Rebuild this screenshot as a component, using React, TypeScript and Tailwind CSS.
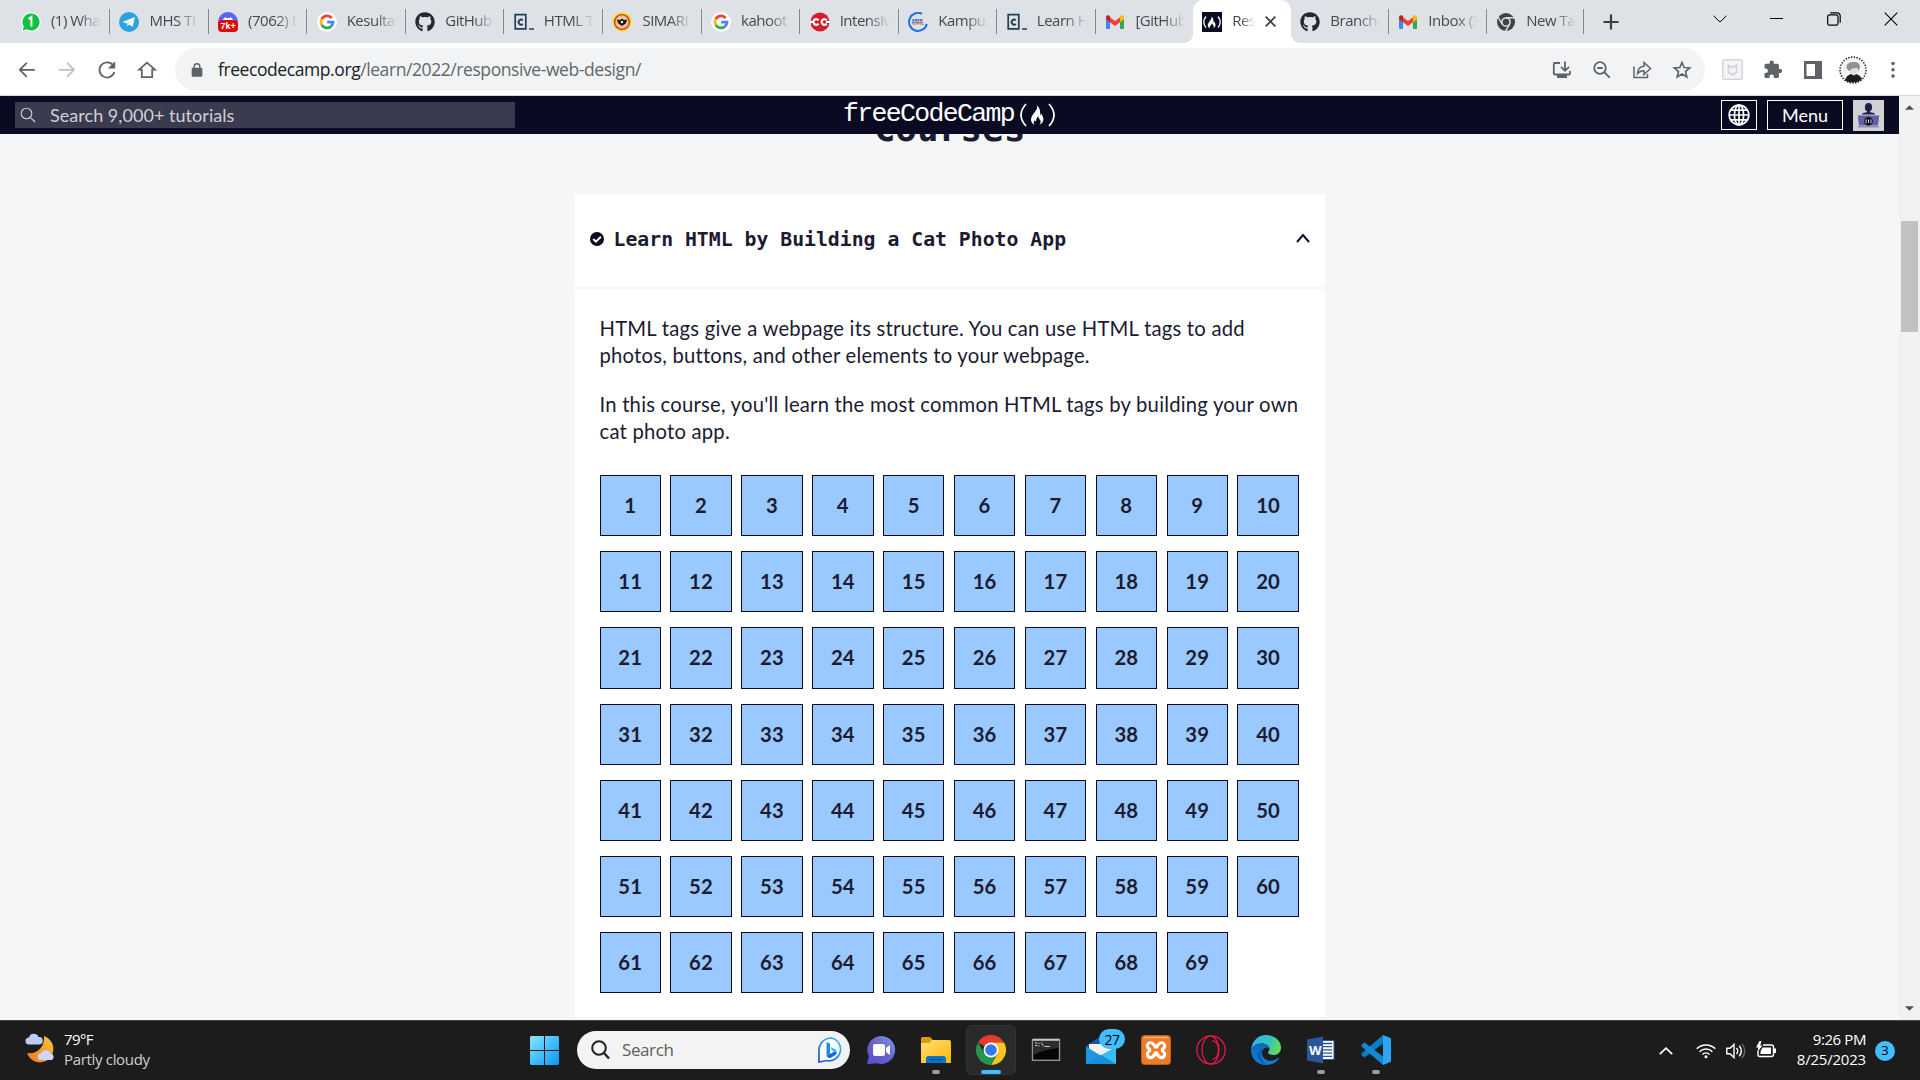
import React from "react";
import { FaGithub } from "react-icons/fa";

const ui = "font-['Open_Sans','Noto_Sans',sans-serif]";
const lato = "font-['Lato',sans-serif]";
const mono = "font-['DejaVu_Sans_Mono',monospace]";

function WhatsApp() {
  return (
    <svg viewBox="0 0 20 20" className="size-5">
      <path d="M10 .3a9.7 9.7 0 1 1-4.6 18.2L.3 19.8l1.3-5A9.7 9.7 0 0 1 10 .3Z" fill="#fff" />
      <path d="M10 1.5a8.5 8.5 0 1 1-4.3 15.8L1.7 18.5l1.1-4A8.5 8.5 0 0 1 10 1.5Z" fill="#10c143" />
      <path d="M7.6 7.1 10.4 5v9.6" fill="none" stroke="#fff" strokeWidth="2" />
    </svg>
  );
}
function Telegram() {
  return (
    <svg viewBox="0 0 20 20" className="size-5">
      <circle cx="10" cy="10" r="10" fill="#2ba3df" />
      <path d="M3.5 9.9 15.8 5.1 13.7 15 10.3 12.5 8.4 14.3 8 11.4 3.5 9.9Z" fill="#fff" />
      <path d="m8 11.4 5.2-4-3.9 4.5-.9 2.4Z" fill="#b9dcf0" />
    </svg>
  );
}
function Discord() {
  return (
    <span className="relative block size-5">
      <svg viewBox="0 0 20 20" className="size-5">
        <circle cx="10" cy="10" r="10" fill="#5865f2" />
        <path d="M4.5 10c.3-3 1.5-4.3 3.3-4.8l.7.9h3l.7-.9c1.8.5 3 1.800 3.3 4.800Z" fill="#fff" />
        <rect y="8" width="20" height="12" rx="4" fill="#dd0a0a" />
      </svg>
      <span className="absolute inset-x-0 top-2 text-center font-['Liberation_Sans',sans-serif] text-[9px] leading-3 font-bold text-white">7k+</span>
    </span>
  );
}
function Google() {
  return (
    <svg viewBox="0 0 20 20" className="size-5">
      <circle cx="10" cy="10" r="10" fill="#fff" />
      <g fill="none" strokeWidth="2.800">
        <path d="M14.7 6A6 6 0 0 0 4.8 7.100" stroke="#ea4335" />
        <path d="M4.8 7.100a6 6 0 0 0 0 5.800" stroke="#fbbc05" />
        <path d="M4.8 12.9a6 6 0 0 0 9 1.700" stroke="#34a853" />
        <path d="M13.800 14.6A6 6 0 0 0 16 10.100H10.200" stroke="#4285f4" />
      </g>
    </svg>
  );
}
function Github() {
  return <FaGithub className="size-5 text-[#24292f]" />;
}
function Codecademy() {
  return (
    <svg viewBox="0 0 20 20" className="size-5">
      <path d="M1.200 2.700h10.600v14.200H1.200ZM15 17h5" fill="none" stroke="#204056" strokeWidth="1.700" />
      <path d="M8.800 8.200a2.500 2.500 0 1 0 0 3.800" fill="none" stroke="#204056" strokeWidth="2" />
    </svg>
  );
}
function Simari() {
  return (
    <svg viewBox="0 0 20 20" className="size-5">
      <path d="m10 0 7 2.500 3 7-3 7.500-7 3-7-3L0 9.500l3-7Z" fill="#f3df1c" />
      <circle cx="10" cy="10" r="7.400" fill="#f7b7a0" stroke="#d8362a" strokeWidth="1.400" />
      <circle cx="10" cy="9.500" r="5.200" fill="#f0c9a0" />
      <path d="M4.800 7.500 8 8l2-1.600L12 8l3.200-.5-1.500 4L10 14l-3.700-2.500Z" fill="#1d1a14" />
      <circle cx="10" cy="10" r="1.200" fill="#eee" />
    </svg>
  );
}
function Intensive() {
  return (
    <svg viewBox="0 0 20 20" className="size-5">
      <circle cx="10" cy="10" r="9.500" fill="#d11f2b" />
      <path d="M8.500 8.400a2.800 2.800 0 1 0 0 3.200M16.800 8.400a2.800 2.800 0 1 0 0 3.200M0 10h2.500M16 10h4" fill="none" stroke="#fff" strokeWidth="2.200" />
    </svg>
  );
}
function Kampus() {
  return (
    <svg viewBox="0 0 20 20" className="size-5">
      <path d="M14 1.800A9 9 0 1 0 18.800 12" fill="none" stroke="#1a73e8" strokeWidth="2" />
      <path d="M4.500 8h10.500M4 10.500h11" stroke="#5c79a8" strokeWidth="2" strokeDasharray="2 .5" />
      <path d="M5 12.400q6-1.600 11 .3" fill="none" stroke="#f08433" strokeWidth="1" />
    </svg>
  );
}
function Gmail() {
  return (
    <svg viewBox="0 0 20 20" className="size-5">
      <path d="M1 5v10.800c0 .8.500 1.200 1.200 1.200H5V8Z" fill="#4285f4" />
      <path d="M19 5v10.800c0 .8-.5 1.200-1.200 1.200H15V8Z" fill="#34a853" />
      <path d="M5 5.200 10 9l5-3.800v5L10 14l-5-3.800Z" fill="#ea4335" />
      <path d="M1 7.200V5.500c0-2 2-2.900 3.500-1.800L5 4.100v6.100Z" fill="#c5221f" />
      <path d="M19 7.200V5.500c0-2-2-2.900-3.500-1.800L15 4.100v6.100Z" fill="#fbbc04" />
    </svg>
  );
}
const FLAME =
  "M6.300 0c1 3-.3 4.500-2.300 7.300C2 10 0 12 0 15.200c0 2.600 1.600 4.700 4 5.800-1.400-1.700-1.300-3.600.2-5 .3.900.8 1.300 1.500 1.200-.4-2.600.6-4 2.300-5.500-.2 2.900 2.700 3.600 2.500 6.300 0 1.200-.6 2.200-1.700 3 2.700-1 4.700-3.200 4.700-6 0-3-1.700-4.300-2.400-6.500-.3 1.300-.6 1.900-1.300 2.200C10.600 6.700 9.500 2 6.300 0Z";
function Fcc() {
  return (
    <svg viewBox="0 0 20 20" className="size-5">
      <path d="M0 0h20v20H0z" fill="#0a0a23" />
      <path d="M4 4.500Q-.5 10 4 15.500M16 4.500q4.500 5.500 0 11" fill="none" stroke="#fff" strokeWidth="1.300" />
      <path d={FLAME} fill="#fff" transform="translate(5.800 4.500) scale(.57)" />
    </svg>
  );
}
function ChromeGray() {
  return (
    <svg viewBox="0 0 20 20" className="size-5">
      <circle cx="10" cy="10" r="9" fill="#3f4346" />
      <circle cx="10" cy="10" r="4.100" fill="#3f4346" stroke="#dee1e6" strokeWidth="1.500" />
      <path d="M10 5.700h8.300M6.200 12.100 2 5M13.700 12.100 9.400 19.300" stroke="#dee1e6" strokeWidth="1.400" />
    </svg>
  );
}

type Tab = { icon: () => React.ReactElement; text: string; active?: boolean; noSep?: boolean; narrow?: boolean };
const tabs: Tab[] = [
  { icon: WhatsApp, text: "(1) Whats" },
  { icon: Telegram, text: "MHS TI 2" },
  { icon: Discord, text: "(7062) Di" },
  { icon: Google, text: "Kesultana" },
  { icon: Github, text: "GitHub -" },
  { icon: Codecademy, text: "HTML Tab" },
  { icon: Simari, text: "SIMARI" },
  { icon: Google, text: "kahoot -" },
  { icon: Intensive, text: "Intensive" },
  { icon: Kampus, text: "Kampus M" },
  { icon: Codecademy, text: "Learn HT" },
  { icon: Gmail, text: "[GitHub]", noSep: true, narrow: true },
  { icon: Fcc, text: "Resp", active: true },
  { icon: Github, text: "Branches" },
  { icon: Gmail, text: "Inbox (3)" },
  { icon: ChromeGray, text: "New Tab", narrow: true },
];

function TabStrip() {
  return (
    <div className={`flex h-[43px] bg-[#dee1e6] pl-[11.400px] text-[#45494d] ${ui}`}>
      {tabs.map((t, i) => (
        <div
          key={i}
          className={`relative flex shrink-0 items-center pl-[9.500px] ${t.narrow ? "w-[96.900px]" : i > 11 ? "w-[98px]" : "w-[98.600px]"} ${
            t.active ? "rounded-t-[10px] bg-white" : ""
          }`}
        >
          <t.icon />
          <span
            className={`-mt-[2.500px] ml-[10px] overflow-hidden text-[15px] leading-6 tracking-[-0.5px] whitespace-nowrap ${
              t.active ? "w-[23px] [mask-image:linear-gradient(to_right,black_40%,transparent)]" : "w-[50px] [mask-image:linear-gradient(to_right,black_56%,transparent)]"
            }`}
          >
            {t.text}
          </span>
          {t.active && (
            <>
              <svg viewBox="0 0 10 10" className="ml-[10px] size-[11px]">
                <path d="m.6.6 8.800 8.800M9.400.6.6 9.400" stroke="#3c4043" strokeWidth="1.600" />
              </svg>
              <i className="absolute bottom-0 -left-[10px] size-[10px] bg-[radial-gradient(circle_at_0_0,transparent_10px,white_10.500px)]" />
              <i className="absolute -right-[10px] bottom-0 size-[10px] bg-[radial-gradient(circle_at_100%_0,transparent_10px,white_10.500px)]" />
            </>
          )}
          {!t.active && !t.noSep && <i className="absolute top-[9px] right-0 h-[25px] w-px bg-[#85898d]" />}
        </div>
      ))}
      <div className="ml-[19px] flex w-4 items-center">
        <svg viewBox="0 0 16 16" className="size-4">
          <path d="M8 .5v15M.5 8h15" stroke="#3c4043" strokeWidth="2.200" />
        </svg>
      </div>
      <div className="mr-[1px] ml-auto flex h-[37px] items-center text-black">
        <span className="flex w-[57px] justify-center">
          <svg viewBox="0 0 14 8" className="h-2 w-3.5" fill="none" stroke="currentColor"><path d="m.5.800 6.500 6.200L13.500.800" /></svg>
        </span>
        <span className="flex w-[57px] justify-center"><i className="block h-px w-[13px] bg-black" /></span>
        <span className="flex w-[57px] justify-center">
          <svg viewBox="0 0 14 14" className="size-3.5" fill="none" stroke="currentColor" strokeWidth="1.200">
            <rect x=".7" y="2.900" width="10.300" height="10.300" rx="1.800" />
            <path d="M3.200.8H10a3.100 3.100 0 0 1 3.200 3.200v6.800" />
          </svg>
        </span>
        <span className="flex w-[57px] justify-center">
          <svg viewBox="0 0 14 14" className="size-3.5" fill="none" stroke="currentColor" strokeWidth="1.100"><path d="m.7.700 12.600 12.600M13.300.700.7 13.300" /></svg>
        </span>
      </div>
    </div>
  );
}

function Slot({ children }: { children: React.ReactNode }) {
  return <span className="flex w-10 shrink-0 items-center justify-center">{children}</span>;
}
function Glyph({ children, dim, s = "size-5" }: { children: React.ReactNode; dim?: boolean; s?: string }) {
  return (
    <svg viewBox="0 0 20 20" className={s} fill="none" stroke={dim ? "#bdc1c6" : "#5f6368"} strokeWidth="1.800">
      {children}
    </svg>
  );
}

function Toolbar() {
  return (
    <div className="flex h-[53px] border-b border-[#d5d7da] bg-white px-[7px] pt-[5px]">
      <div className="flex h-[43px]">
        <Slot><Glyph><path d="M17.800 8.800H3M9.800 1.800l-7 7 7 7" transform="translate(0 1)" /></Glyph></Slot>
        <Slot><Glyph dim><path d="M2 9.800h14.800M10 2.800l7 7-7 7" /></Glyph></Slot>
        <Slot>
          <Glyph>
            <path d="M16.300 5.500A7.600 7.600 0 1 0 17.400 12" />
            <path d="M18.200 1.200v7.300h-7.300Z" fill="#5f6368" stroke="none" />
          </Glyph>
        </Slot>
        <Slot><Glyph><path d="M2 9.700h2.800v7.400h10.400V9.700H18L10 2.600Z" /></Glyph></Slot>
      </div>
      <div className="ml-2 flex h-[43px] w-[1530px] items-center rounded-full bg-[#f1f3f4] pr-[3px] pl-[16px]">
        <svg viewBox="0 0 12 15" className="h-[14px] w-[12px]">
          <rect x=".3" y="5" width="11.400" height="9.700" rx="1.300" fill="#5f6368" />
          <path d="M3 5.500V3.800a3 3 0 0 1 6 0v1.700" fill="none" stroke="#5f6368" strokeWidth="1.500" />
        </svg>
        <span className={`ml-[15px] text-[17.500px] tracking-[-0.420px] whitespace-nowrap text-[#63676c] ${ui}`}>
          <span className="text-[#202124]">freecodecamp.org</span>/learn/2022/responsive-web-design/
        </span>
        <div className="ml-auto flex">
          <Slot>
            <Glyph><path d="M8 3H2.800q-1 0-1 1v9.500q0 1 1 1H17q1 0 1-1V11M13 1.500v8.500M9 6.800l4 4 4-4" /><path d="M5 14.500h10V18H5z" fill="#5f6368" stroke="none" /></Glyph>
          </Slot>
          <Slot><Glyph><circle cx="8" cy="8" r="5.800" /><path d="M5.300 8h5.400M12.200 12.200l5.500 5.500" /></Glyph></Slot>
          <Slot><Glyph><path d="M2 6.500v11h13.500V14" strokeWidth="1.500" /><path d="M5.500 13.500c.3-4.500 2.300-7 6.500-7.300V2.500l6.500 6-6.500 6v-3.800c-3 0-5 .8-6.500 2.800Z" strokeWidth="1.500" /></Glyph></Slot>
          <Slot><Glyph><path d="m10 2.500 2.200 5 5.500.5-4.200 3.600 1.300 5.400-4.800-2.900L5.200 17l1.300-5.400L2.300 8l5.500-.5Z" strokeWidth="1.700" /></Glyph></Slot>
        </div>
      </div>
      <div className="ml-[7.500px] flex h-[43px]">
        <Slot>
          <svg viewBox="0 0 21 21" className="size-[21px]" fill="none"><rect x=".7" y=".7" width="19.600" height="19.600" rx="2" fill="#f3f4f5" stroke="#d3d5d9" strokeWidth="1.400" /><path d="m6.500 6.500 4 2 4-2v7l-4 2.200-4-2.200Z" stroke="#d0d3d6" strokeWidth="1.700" /></svg>
        </Slot>
        <Slot>
          <Glyph><path d="M17.200 9h-1.300V5.300q0-1.500-1.500-1.500h-3.600V2.600a2.100 2.100 0 0 0-4.200 0v1.200H3q-1.500 0-1.500 1.500v3.300h1.200a2.200 2.200 0 0 1 0 4.400H1.500v3.500q0 1.500 1.500 1.500h3.500v-1.200a2.200 2.200 0 0 1 4.400 0V18h3.500q1.500 0 1.500-1.500V13h1.300a2 2 0 0 0 0-4Z" fill="#5f6368" stroke="none" /></Glyph>
        </Slot>
        <Slot><Glyph><path d="M1 1h18v18H1zm2.500 3v12H12V4Z" fill="#5f6368" fillRule="evenodd" stroke="none" /></Glyph></Slot>
        <Slot>
          <svg viewBox="0 0 28 28" className="size-7">
            <circle cx="14" cy="14" r="13" fill="#f4f4f4" stroke="#222" strokeWidth="1.500" strokeDasharray="1.400 1.400" />
            <path d="M6 24q1.500-4.500 6-6h5q4 1 6 5-3.500 3.500-9 3.500T6 24Z" fill="#1d1d1f" />
            <path d="M10.500 11h8v4q-1.500 4-3.500 4.500-3-.5-4.500-4Z" fill="#e8dfdb" />
            <path d="M7.500 12q-.5-5.500 6.500-6 7-.5 7 5l-1.500 4.500-1-3.500-5.500.5-2 2-1 .5Z" fill="#8e9295" />
          </svg>
        </Slot>
        <Slot><Glyph><g fill="#5f6368" stroke="none"><circle cx="10" cy="3.500" r="1.800" /><circle cx="10" cy="9.800" r="1.800" /><circle cx="10" cy="16.100" r="1.800" /></g></Glyph></Slot>
      </div>
    </div>
  );
}

function SiteHeader() {
  return (
    <header className={`relative z-10 flex h-[38px] shrink-0 bg-[#0a0a23] pr-[15px] pl-[15px] ${lato}`}>
      <div className="mt-1.5 flex h-[26px] w-[500px] items-center bg-[#3b3b4f] pl-[5px] text-[#d0d0d5]">
        <svg viewBox="0 0 16 16" className="size-4" fill="none" stroke="#d0d0d5" strokeWidth="1.100"><circle cx="6.500" cy="6.500" r="5.300" /><path d="m10.300 10.300 4.700 4.700" /></svg>
        <span className="ml-[14px] text-[18px] leading-[26px] tracking-[0.04px]">Search 9,000+ tutorials</span>
      </div>
      <div className="ml-[328px] flex h-[38px] items-center text-white">
        <span className="-mt-px w-[173px] font-['Liberation_Mono',monospace] text-[26.500px] tracking-[-1.650px] whitespace-nowrap">freeCodeCamp</span>
        <svg viewBox="0 0 38 24" className="ml-[3px] h-6 w-[38px]">
          <path d="M7 1Q-3 12 7 23M30 1q10 11 0 22" fill="none" stroke="#fff" strokeWidth="1.700" />
          <path d={FLAME} fill="#fff" transform="translate(12 2.500) scale(.92)" />
        </svg>
      </div>
      <div className="ml-auto flex pt-1">
        <span className="flex h-[30px] w-9 items-center justify-center border border-white">
          <svg viewBox="0 0 22 22" className="size-[22px]" fill="none" stroke="#fff" strokeWidth="1.700">
            <circle cx="11" cy="11" r="9.800" fill="#0a0a23" />
            <ellipse cx="11" cy="11" rx="4.600" ry="9.800" />
            <path d="M11 1v20M1 11h20M2.500 6.200h17M2.500 15.800h17" />
          </svg>
        </span>
        <span className="ml-[10px] flex h-[30px] w-[76px] items-center justify-center border border-white text-[18px] text-white">Menu</span>
        <span className="ml-[10px] flex size-[31px] items-center justify-center bg-[#d0d0d5]">
          <svg viewBox="0 0 31 31" className="size-[31px]">
            <ellipse cx="15.500" cy="7.300" rx="3.600" ry="4.300" fill="#1f1f4e" />
            <path d="M14 11h3v2h-3Z" fill="#1f1f4e" />
            <path d="M8.500 14.500q1-1.800 5-2.200h4q4 .4 5 2.200Z" fill="#1f1f4e" />
            <path d="M4.800 15.500h21.400L25 25.500H6Z" fill="#62619f" />
            <path d="M5 26h21v1.500H5Z" fill="#8a8abf" />
            <circle cx="15.500" cy="21.300" r="4.300" fill="#0a0a23" />
            <path d="M13.300 19.300q-1 2 0 4M17.700 19.300q1 2 0 4M15.500 19.800v3" fill="none" stroke="#fff" strokeWidth=".9" />
          </svg>
        </span>
      </div>
    </header>
  );
}

function Page() {
  return (
    <div className="flex h-[924px] bg-[#f5f6f7]">
      <div className="flex w-[1899px] flex-col overflow-hidden">
        <SiteHeader />
        <main className="flex flex-col items-center text-[#1b1b32]">
          <h2 className={`-mt-[25px] h-[85px] text-[36px] leading-[40px] font-bold ${mono}`}>Courses</h2>
          <section className="h-[823px] w-[750px] bg-white">
            <div className="flex h-[95px] items-start border-b-2 border-[#f5f6f7] pt-[34px] pr-[15px] pl-[15px]">
              <svg viewBox="0 0 14 14" className="mt-[4px] size-[14px]">
                <circle cx="7" cy="7" r="7" fill="#0a0a23" />
                <path d="m3.200 7 2.700 2.700 5-5" fill="none" stroke="#fff" strokeWidth="2" />
              </svg>
              <h3 className={`ml-[10px] text-[19.800px] leading-6 font-bold ${mono}`}>Learn HTML by Building a Cat Photo App</h3>
              <svg viewBox="0 0 14 10" className="mt-[5px] ml-auto h-[10px] w-[14px]">
                <path d="m1 9 6-7 6 7" fill="none" stroke="#0a0a23" strokeWidth="2" />
              </svg>
            </div>
            <div className={`px-[25px] pt-[26px] text-[20.250px] leading-[27.200px] whitespace-nowrap ${lato}`}>
              <div className="tracking-[0.215px]">
                <p>HTML tags give a webpage its structure. You can use HTML tags to add<br />photos, buttons, and other elements to your webpage.</p>
                <p className="mt-[21.500px]">In this course, you'll learn the most common HTML tags by building your own<br />cat photo app.</p>
              </div>
              <div className="mt-[29.800px] grid w-[699.300px] grid-cols-10 gap-x-[9.500px] gap-y-[15px]">
                {Array.from({ length: 69 }, (_, i) => (
                  <div key={i} className="flex h-[61.200px] items-center justify-center border border-[#0a0a23] bg-[#99c9ff] font-bold tracking-[0.2px]">{i + 1}</div>
                ))}
              </div>
            </div>
          </section>
        </main>
      </div>
      <div className="flex w-[21px] flex-col items-center bg-[#f1f1f1]">
        <svg viewBox="0 0 10 5" className="mt-[9px] h-[5px] w-[9px]"><path d="M0 5 5 0l5 5Z" fill="#505050" /></svg>
        <div className="mt-[111px] h-[111px] w-[17px] bg-[#c1c1c1]" />
        <svg viewBox="0 0 10 5" className="mt-auto mb-[9px] h-[5px] w-[9px]"><path d="m0 0 5 5 5-5Z" fill="#505050" /></svg>
      </div>
    </div>
  );
}

function Chat() {
  return (
    <svg viewBox="0 0 30 30" className="-ml-px size-[30px]">
      <defs><linearGradient id="chat" x1="0" y1="1" x2="1" y2="0"><stop stopColor="#5052cf" /><stop offset=".5" stopColor="#6a60c8" /><stop offset="1" stopColor="#7d9cf0" /></linearGradient></defs>
      <path d="M15.500 1a14 14 0 1 1-5 27.200L1 29l1.800-7.600A14 14 0 0 1 15.500 1Z" fill="url(#chat)" />
      <rect x="7" y="9" width="12" height="12" rx="2" fill="#fff" /><path d="m20 13 4-3v10l-4-3Z" fill="#fff" />
    </svg>
  );
}
function Folder() {
  return (
    <svg viewBox="0 0 30 30" className="size-[30px]">
      <defs><linearGradient id="fold" x1="0" y1="0" x2="1" y2="1"><stop stopColor="#ffdf70" /><stop offset="1" stopColor="#fbb70f" /></linearGradient></defs>
      <path d="M0 8V3.500Q0 2 1.500 2H9l3 3h-1v4H0Z" fill="#dd9b00" /><path d="M0 8h8l3-3h17q2 0 2 2v21H0Z" fill="url(#fold)" />
      <path d="M5 28v-4.500Q5 21 7.500 21h15q2.500 0 2.500 2.500V28Z" fill="#0b76c8" /><path d="M9 24.500h12" stroke="#064a8c" strokeWidth="1.200" />
    </svg>
  );
}
function Chrome() {
  return (
    <svg viewBox="0 0 30 30" className="size-[30px]">
      <path d="M15 15 2 7.500A15 15 0 0 1 28 7.500H15Z" fill="#e33b2e" />
      <path d="M15 7.500h13A15 15 0 0 1 15 30l6.500-11.200Z" fill="#fcc31e" />
      <path d="M2 7.500A15 15 0 0 0 15 30l6.500-11.200L15 15l-6.500 3.800Z" fill="#23974a" />
      <circle cx="15" cy="15" r="7.500" fill="#fff" /><circle cx="15" cy="15" r="5.800" fill="#3079f0" />
    </svg>
  );
}
function Cmd() {
  return (
    <svg viewBox="0 0 30 30" className="-ml-px size-[30px]">
      <rect x="1.500" y="4.500" width="27" height="20.800" fill="#050505" stroke="#8d929b" strokeWidth="1.400" />
      <path d="M2 4.800h26" stroke="#c5c8cf" strokeWidth="2" /><path d="M2 6h26v7Q14 14 2 20Z" fill="#2d2d2d" />
      <path d="M4 8h2.500m-2.500 2.500h2.500M8 8v1m0 1.500v1M10 7.500l3 4m.8 0h5" stroke="#ddd" strokeWidth=".9" fill="none" />
    </svg>
  );
}
function Mail() {
  return (
    <span className="relative block size-[30px]">
      <svg viewBox="0 0 30 30" className="size-[30px]">
        <path d="M0 11 15 1l15 10v8H0Z" fill="#0f5ba8" /><path d="M3 9h24v5l-12 7L3 14Z" fill="#f1f1f1" />
        <path d="M0 11.500 15 21 0 29Z" fill="#1e96e0" /><path d="M30 11.500V29H0Z" fill="#38bdf5" /><path d="M0 29 15 20l15 9Z" fill="#178fdc" />
      </svg>
      <span className={`absolute -top-[6px] left-[13px] flex h-5 w-[26px] items-center justify-center rounded-full bg-[#42bdff] text-[14px] tracking-[-0.5px] text-black ${ui}`}>27</span>
    </span>
  );
}
function Xampp() {
  return (
    <svg viewBox="0 0 30 30" className="size-[30px]" fill="none" strokeLinecap="round">
      <rect x=".5" y=".5" width="29" height="29" rx="3" fill="#f17b25" stroke="#b9632a" /><path d="M4 2.500h22" stroke="#f9ad73" strokeWidth="1.500" />
      <path d="M9.500 11q5.500 4 0 8.500M20.500 11q-5.500 4 0 8.500M11.500 15h7" stroke="#fff" strokeWidth="9.500" />
      <path d="M9.500 10.700q5 4.300 0 8.600M20.500 10.700q-5 4.300 0 8.600M12 15h6" stroke="#f17b25" strokeWidth="3.200" />
    </svg>
  );
}
function Opera() {
  return (
    <svg viewBox="0 0 30 30" className="size-[30px]" fill="none" stroke="#e5174a" strokeWidth="1.300">
      <circle cx="15" cy="15" r="14.200" /><ellipse cx="14.500" cy="15" rx="8.500" ry="13.800" /><path d="M16.500 5.500c8 1.500 8 17.500 0 19" />
    </svg>
  );
}
function Edge() {
  return (
    <svg viewBox="0 0 30 30" className="size-[30px]">
      <defs>
        <linearGradient id="e1" x1="0" y1=".3" x2="1" y2=".6"><stop stopColor="#30b4ec" /><stop offset=".6" stopColor="#37c6b8" /><stop offset="1" stopColor="#66dd4e" /></linearGradient>
        <linearGradient id="e2" x1="0" y1="0" x2="0" y2="1"><stop stopColor="#0c6bb8" /><stop offset="1" stopColor="#1180da" /></linearGradient>
      </defs>
      <path d="M0 15C1 6 7 0 15 0c9 0 15 6 15 12.500 0 5-3.500 7.500-7.500 7.500-3.500 0-5.500-1-5.500-2.500 0-1 1.500-1.500 1.500-3.500C18.500 11 15 8.500 11 8.500 5.500 8.500 1 11.500 0 15Z" fill="url(#e1)" />
      <path d="M0 15c1-4 5-6.500 10-6.500 5.500 0 8.500 3 8.500 5-3-2.500-7.500 0-7.500 4.500 0 5 5 9 11 7.500 2-.4 4-1.500 5-2.500.8-.5 1.200 0 .8.700C25 28 20.500 30 15 30 6 30 0 23 0 15Z" fill="url(#e2)" />
      <path d="M11 15.500c-3 6 1 13 7.500 14.200Q13 31 8 25.500C5 21 7 16.500 11 13Z" fill="#0d4f95" opacity=".6" />
    </svg>
  );
}
function Word() {
  return (
    <span className="relative block size-[30px]">
      <svg viewBox="0 0 30 30" className="size-[30px]">
        <rect x="15" y="5.500" width="13" height="19" fill="#fff" stroke="#2b579a" /><path d="M17 8.500h9m-9 3.200h9m-9 3.200h9m-9 3.200h9m-9 3.200h9" stroke="#2b579a" strokeWidth="1.300" />
        <path d="M1 4.500 17 1.500v27l-16-3Z" fill="#2b579a" />
      </svg>
      <span className="absolute top-[7px] left-[3px] font-['Open_Sans',sans-serif] text-[13px] leading-4 font-bold text-white">W</span>
    </span>
  );
}
function Code() {
  return (
    <svg viewBox="0 0 30 30" className="size-[30px]">
      <path d="M22 8.500 3.500 22.500.5 20.300v-1.800L22 0Z" fill="#0a7cc4" /><path d="M22 21.500 3.500 7.500.5 9.700v1.800L22 30Z" fill="#1387d2" />
      <path d="m22 0 8 3.200v23.600L22 30Z" fill="#2ba6f3" />
    </svg>
  );
}
const apps = [
  { icon: Chat }, { icon: Folder, dot: true }, { icon: Chrome, current: true }, { icon: Cmd }, { icon: Mail },
  { icon: Xampp }, { icon: Opera }, { icon: Edge }, { icon: Word, dot: true }, { icon: Code, dot: true },
];

function Taskbar() {
  return (
    <div className={`flex h-[60px] border-t border-[#45474a] bg-[#1c1c1c] text-white ${ui}`}>
      <div className="flex w-[530px] pt-[8px] pl-[25px]">
        <svg viewBox="0 0 30 30" className="mt-[4px] size-[30px]">
          <defs><linearGradient id="moon" x1="1" y1="0" x2="0" y2="1"><stop stopColor="#f8c63c" /><stop offset="1" stopColor="#f0791e" /></linearGradient></defs>
          <path d="M19 3a13.500 13.500 0 1 1-17 17C12 22 20 14 19 3Z" fill="url(#moon)" />
          <path d="M4 11.500a3.500 3.500 0 0 1 0-7 5 5 0 0 1 9.500-.5 3.700 3.700 0 0 1 1 7.500Z" fill="#bccdf5" />
          <path d="M16 27a3.200 3.200 0 0 1 0-6.500 5 5 0 0 1 9.300-.2A3.500 3.500 0 0 1 26.500 27Z" fill="#cbd8f8" />
        </svg>
        <div className="ml-[9px] text-[15px] leading-5 tracking-[-0.32px]">
          <div className="tracking-[-0.6px]">79°F</div>
          <div className="text-[#cfcfcf]">Partly cloudy</div>
        </div>
      </div>
      <svg viewBox="0 0 29 29" className="mt-[15px] size-[29px]">
        <defs><linearGradient id="win" x1="0" y1="0" x2="1" y2="1"><stop stopColor="#8fe3ff" /><stop offset=".5" stopColor="#43c0fb" /><stop offset="1" stopColor="#0c93f5" /></linearGradient></defs>
        <path d="M1 0h13v14H0V1Zm14 0h13l1 1v13H15ZM0 15h14v14H1l-1-1Zm15 0h14v13l-1 1H15Z" fill="url(#win)" />
      </svg>
      <div className="mt-[10px] ml-[18px] flex h-[38px] w-[273px] items-center rounded-full bg-[#f3f3f3] pr-[6px] pl-[14px]">
        <svg viewBox="0 0 20 20" className="size-5" fill="none" stroke="#222" strokeWidth="2"><circle cx="8" cy="8" r="6.800" /><path d="m13 13 5 5.500" strokeWidth="2.400" /></svg>
        <span className="ml-[11px] text-[17px] tracking-[-0.4px] text-[#5e5e5e]">Search</span>
        <svg viewBox="0 0 26 26" className="ml-auto size-[26px]" fill="none">
          <defs><linearGradient id="bing" x1="1" y1="0" x2="0" y2="1"><stop stopColor="#38c8ee" /><stop offset="1" stopColor="#1c4fc4" /></linearGradient></defs>
          <path d="M13.500 1a11.500 11.500 0 1 1-5 22.500L1 25V13C1 6.500 6.500 1 13.500 1Z" stroke="url(#bing)" strokeWidth="1.700" fill="#fff" />
          <path d="m8.500 5 3.500 1.500V17l-3.500 2Z" fill="#218ce8" /><path d="M8.500 19 18 13.500q1.500 2.500-.5 4.500l-5 3q-2.500.5-4-2Z" fill="#1c64dc" /><path d="m12.500 10 5 2.200q1.500 1.500.5 3.300l-4-2Z" fill="#33bdf0" />
        </svg>
      </div>
      <div className="ml-[3.500px] flex">
        {apps.map((a, i) => (
          <div key={i} className="flex w-[55px] justify-center pt-1">
            <div className={`relative flex h-[50px] w-[50px] justify-center rounded-md ${a.current ? "border border-[#343434] bg-[#2a2a2a] pt-[9px]" : "pt-[10px]"}`}>
              <a.icon />
              {a.dot && <i className="absolute bottom-[1px] h-1 w-2 rounded-full bg-[#9a9a9a]" />}
              {a.current && <i className="absolute bottom-0 h-1 w-5 rounded-full bg-[#42bdff]" />}
            </div>
          </div>
        ))}
      </div>
      <div className="mr-[25px] ml-auto flex items-center">
        <svg viewBox="0 0 14 8" className="h-2 w-[14px]" fill="none" stroke="#fff" strokeWidth="1.700"><path d="m.8 7.200 6.200-6 6.200 6" /></svg>
        <svg viewBox="0 0 20 16" className="ml-[23px] h-4 w-5" fill="none" stroke="#fff" strokeWidth="1.500">
          <path d="M.7 5.800a13 13 0 0 1 18.600 0M3.600 8.700a9 9 0 0 1 12.800 0M6.500 11.500a5 5 0 0 1 7 0" /><circle cx="10" cy="13.800" r="1.500" fill="#fff" stroke="none" />
        </svg>
        <svg viewBox="0 0 20 18" className="ml-[10px] h-[18px] w-5" fill="none" stroke="#fff" strokeWidth="1.400">
          <path d="M.8 6.200h3.200l4-3.800v13.200l-4-3.800H.8ZM10.500 6q2.500 3 0 6M13.200 3.800q4.300 5.200 0 10.400" /><path d="M16 1.800q5.500 7.200 0 14.400" stroke="#666" />
        </svg>
        <svg viewBox="0 0 20 18" className="-mt-[2px] ml-[10px] h-[18px] w-5" fill="none" stroke="#fff" strokeWidth="1.400">
          <path d="M7 4h8.500q2 0 2 2v7.500q0 2-2 2H4q-2 0-2-2V10" /><path d="M18 7.500h2v4.500h-2ZM6.500 6.500H15v6.500H4.500v-2.500Z" fill="#fff" stroke="none" /><path d="M3.500 0 0 6.500h2.300L1.500 11l5-6.500H4.200L5.500 0Z" fill="#fff" stroke="none" />
        </svg>
        <div className="-mt-[4px] w-[90px] text-right text-[15px] leading-5 tracking-[-0.2px] whitespace-nowrap">
          <div className="tracking-[-0.4px]">9:26 PM</div>
          <div>8/25/2023</div>
        </div>
        <span className="ml-[9px] flex size-5 items-center justify-center rounded-full bg-[#42bdff] text-[13px] text-black">3</span>
      </div>
    </div>
  );
}

export default function App() {
  return (
    <div className="flex h-[1080px] w-[1920px] flex-col overflow-hidden">
      <TabStrip />
      <Toolbar />
      <Page />
      <Taskbar />
    </div>
  );
}
